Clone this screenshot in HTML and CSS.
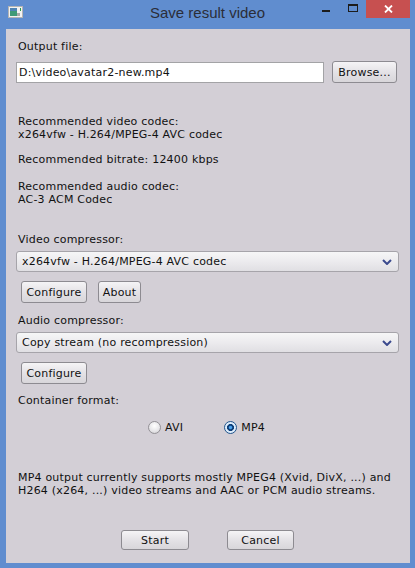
FILE: index.html
```html
<!DOCTYPE html>
<html lang="en">

<head>
  <meta charset="UTF-8">
  <meta name="viewport" content="width=device-width, initial-scale=1.0">
  <title>Save result video</title>
  <link rel="stylesheet" href="styles.css">
</head>

<body>
  <div class="window">
    <!-- title bar -->
    <div class="titlebar">
      <div class="app-icon">
        <svg width="15" height="12" viewBox="0 0 15 12">
          <rect x="0.5" y="0.5" width="14" height="11" fill="#f2f2f2" stroke="#b4b4b4" />
          <rect x="2" y="2" width="7" height="8" fill="#3f9a78" />
          <rect x="2" y="2" width="7" height="3" fill="#4f84b4" />
          <rect x="9" y="7" width="3" height="3" fill="#a8a8a8" />
          <rect x="12" y="2" width="1" height="3" fill="#2e9b4a" />
        </svg>
      </div>
      <div class="title">Save result video</div>
      <div class="controls">
        <span class="ctl min"><i></i></span>
        <span class="ctl max"><i></i></span>
        <span class="ctl close">
          <svg width="9" height="8" viewBox="0 0 9 8">
            <path d="M1 0.5 L8 7.5 M8 0.5 L1 7.5" stroke="#fff" stroke-width="1.8" />
          </svg>
        </span>
      </div>
    </div>

    <!-- client area -->
    <div class="client">
      <div class="label">Output file:</div>
      <div class="file-row">
        <input class="field" type="text" value="D:\video\avatar2-new.mp4">
        <button class="btn browse">Browse...</button>
      </div>

      <div class="text info">Recommended video codec:<br>x264vfw - H.264/MPEG-4 AVC codec</div>
      <div class="text bitrate">Recommended bitrate: 12400 kbps</div>
      <div class="text audio-info">Recommended audio codec:<br>AC-3 ACM Codec</div>

      <div class="label section">Video compressor:</div>
      <div class="combo">
        <span>x264vfw - H.264/MPEG-4 AVC codec</span>
        <svg width="10" height="6" viewBox="0 0 10 6">
          <polyline points="1,1 5,5 9,1" fill="none" stroke="#3b4a8e" stroke-width="2" />
        </svg>
      </div>
      <div class="btn-row">
        <button class="btn configure">Configure</button>
        <button class="btn about">About</button>
      </div>

      <div class="label section-sm">Audio compressor:</div>
      <div class="combo">
        <span>Copy stream (no recompression)</span>
        <svg width="10" height="6" viewBox="0 0 10 6">
          <polyline points="1,1 5,5 9,1" fill="none" stroke="#3b4a8e" stroke-width="2" />
        </svg>
      </div>
      <div class="btn-row">
        <button class="btn configure">Configure</button>
      </div>

      <div class="label format">Container format:</div>
      <div class="radios">
        <label class="option"><span class="radio"></span>AVI</label>
        <label class="option"><span class="radio checked"></span>MP4</label>
      </div>

      <div class="text note">MP4 output currently supports mostly MPEG4 (Xvid, DivX, ...) and<br>H264 (x264, ...) video streams and AAC or PCM audio streams.</div>

      <div class="actions">
        <button class="btn start">Start</button>
        <button class="btn cancel">Cancel</button>
      </div>
    </div>
  </div>
</body>

</html>
```

FILE: styles.css
```css
/* page */
body {
  margin: 0;
  overflow: hidden;
}

/* window frame */
.window {
  width: 415px;
  height: 568px;
  display: flex;
  flex-direction: column;
  background: #608dcf;
  font-family: "DejaVu Sans", sans-serif;
  font-size: 11px;
  line-height: 13px;
  color: #111;
}

/* title bar */
.titlebar {
  height: 29px;
  display: grid;
  grid-template-columns: 1fr auto 1fr;
  flex-shrink: 0;
}

.app-icon {
  padding: 6px 0 0 8px;
}

.app-icon svg {
  display: block;
}

.title {
  padding-top: 3px;
  font-family: "Liberation Sans", Arial, sans-serif;
  font-size: 15px;
  line-height: 20px;
  color: #2b2d38;
}

.controls {
  display: flex;
  justify-content: flex-end;
  align-items: flex-start;
  padding-right: 5px;
}

.ctl {
  height: 18px;
  display: flex;
  justify-content: center;
}

.ctl.min {
  width: 26px;
  padding-top: 10px;
  box-sizing: border-box;
}

.ctl.min i {
  width: 8px;
  height: 2px;
  background: #1c1c1c;
}

.ctl.max {
  width: 27px;
  padding-top: 4px;
  box-sizing: border-box;
}

.ctl.max i {
  width: 10px;
  height: 8px;
  box-sizing: border-box;
  border: 1px solid #1c1c1c;
  border-top-width: 2px;
}

.ctl.close {
  width: 44px;
  align-items: center;
  background: #c75050;
}

.ctl.close svg {
  display: block;
}

/* client area */
.client {
  flex: 1;
  margin: 0 5px 5px 6px;
  padding: 11px 11px 0 10px;
  background: #d3cfd6;
  letter-spacing: 0.2px;
}

.label,
.text {
  padding-left: 2px;
  white-space: nowrap;
}

/* output file row */
.file-row {
  margin-top: 8px;
  display: flex;
  align-items: center;
  gap: 8px;
}

.field {
  width: 308px;
  height: 21px;
  box-sizing: border-box;
  margin: 0;
  padding: 0 2px;
  border: 1px solid #a3a3a6;
  background: #fff;
  font: inherit;
  letter-spacing: inherit;
  color: #111;
  outline: none;
}

/* buttons */
.btn {
  height: 22px;
  box-sizing: border-box;
  margin: 0;
  padding: 0;
  border: 1px solid #8d8b91;
  border-radius: 3px;
  background: linear-gradient(180deg, #f5f4f6, #e4e2e6 50%, #d8d6da);
  font: inherit;
  letter-spacing: inherit;
  color: #111;
  text-align: center;
}

.browse {
  width: 65px;
}

.configure {
  width: 66px;
}

.about {
  width: 43px;
}

/* recommendations */
.info {
  margin-top: 32px;
}

.bitrate {
  margin-top: 12px;
}

.audio-info {
  margin-top: 14px;
}

.section {
  margin-top: 27px;
}

.section-sm {
  margin-top: 11px;
}

/* drop-down boxes */
.combo {
  margin-top: 5px;
  height: 21px;
  box-sizing: border-box;
  display: flex;
  align-items: center;
  justify-content: space-between;
  padding: 0 6px 0 5px;
  border: 1px solid #a6a4aa;
  border-radius: 3px;
  background: linear-gradient(180deg, #f6f6f7, #ecebee 50%, #e0dfe3);
}

.btn-row {
  margin-top: 9px;
  padding-left: 5px;
  display: flex;
  gap: 11px;
}

/* container format */
.format {
  margin-top: 10px;
}

.radios {
  margin-top: 14px;
  height: 13px;
  display: flex;
  justify-content: center;
  gap: 41px;
  padding-right: 2px;
}

.option {
  display: flex;
  align-items: center;
  gap: 4px;
}

.radio {
  width: 13px;
  height: 13px;
  box-sizing: border-box;
  border-radius: 50%;
  border: 1px solid #939196;
  background: radial-gradient(circle at 50% 35%, #ffffff, #e6e5e8 60%, #c9c8cc);
}

.radio.checked {
  border-color: #21558c;
  background: radial-gradient(circle, #49a3ee 0 1.2px, #0f3f78 2.2px 3.2px, #dcecfb 3.8px);
}

/* note */
.note {
  margin-top: 37px;
}

/* start / cancel */
.actions {
  margin-top: 33px;
  display: flex;
  justify-content: center;
  gap: 38px;
}

.actions .btn {
  height: 20px;
}

.start {
  width: 68px;
}

.cancel {
  width: 67px;
}
```
